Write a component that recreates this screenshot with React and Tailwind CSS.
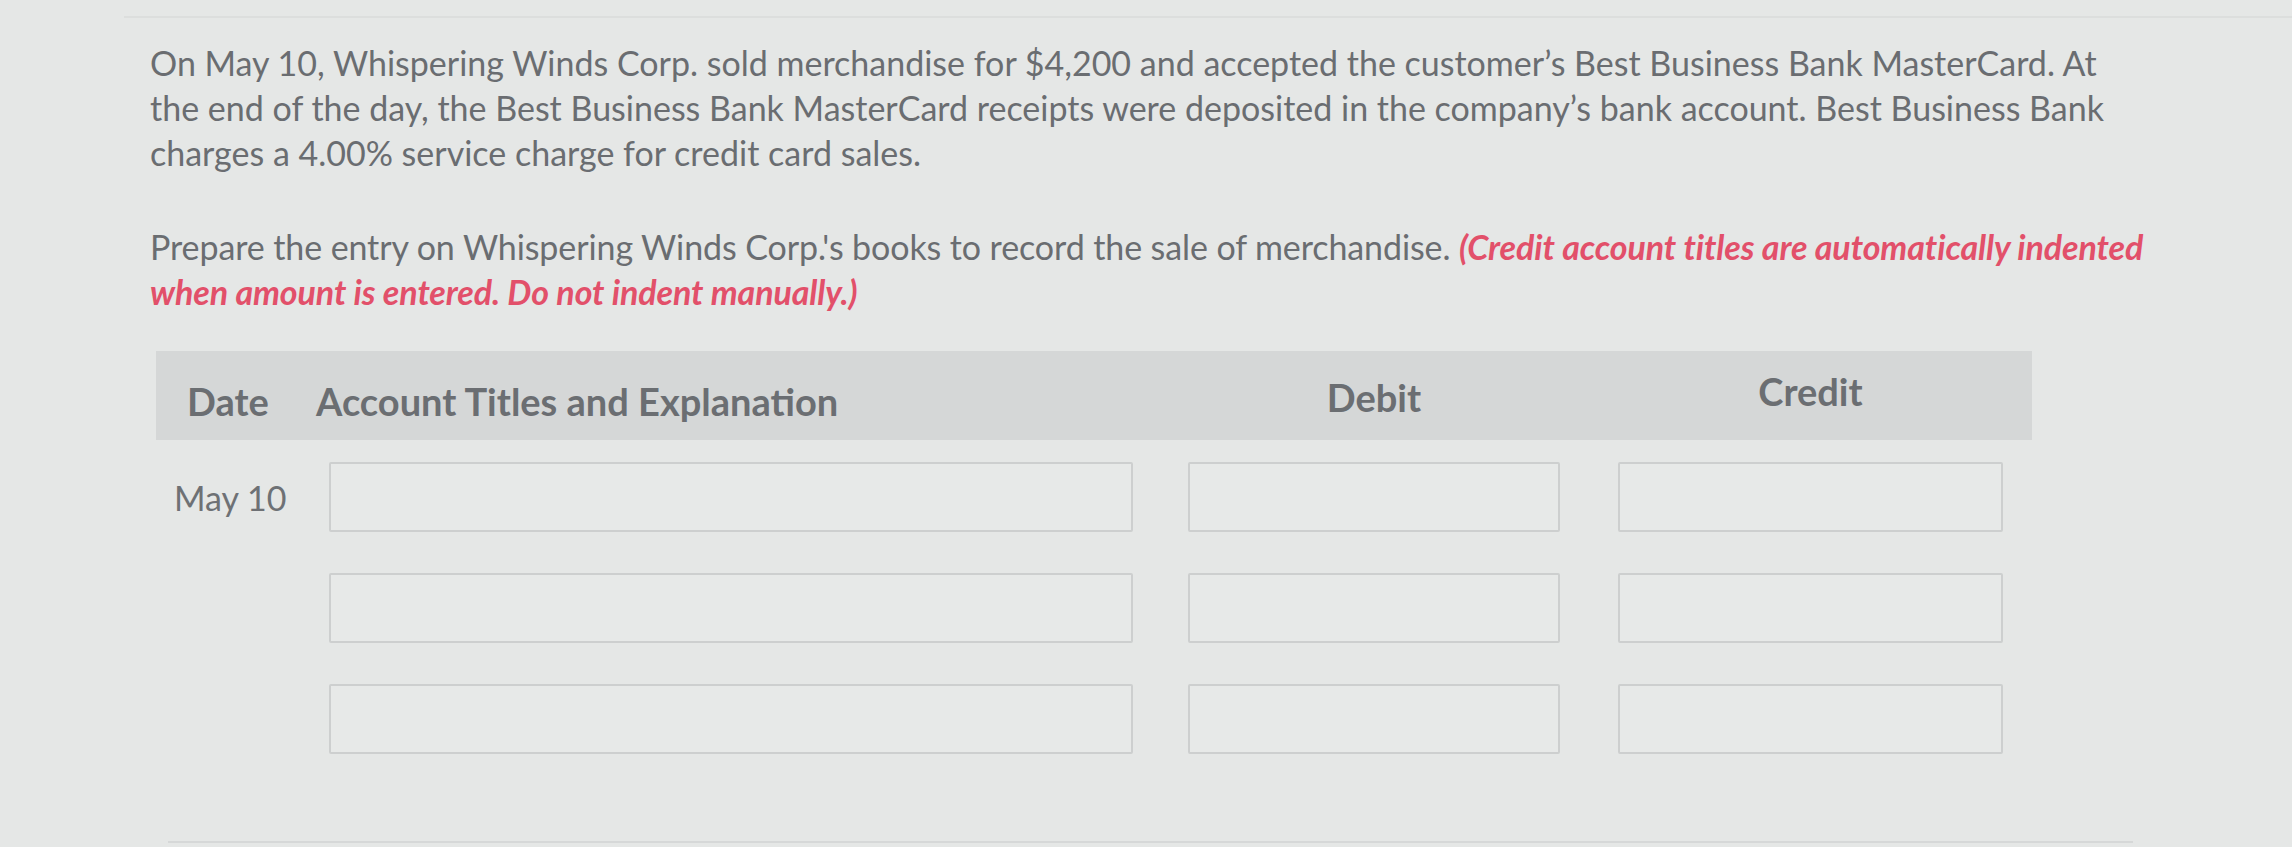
import React from "react";

const Box = ({ w }) => (
  <div className={`h-[70px] ${w} border-2 border-[#cdcfcf] rounded-[2px] bg-[#e7e9e8]`} />
);

export default function App() {
  return (
    <div
      className="w-[2292px] h-[847px] overflow-hidden bg-[#e5e7e6] text-[#6a6d71]"
      style={{ fontFamily: "Lato, 'Open Sans', sans-serif" }}
    >
      <div className="ml-[124px] mt-[16px] h-[2px] bg-[#dcdedd]" />
      <div className="pl-[150px] pt-[22px]">
        <div className="text-[34px] leading-[45px]">
          <div className="whitespace-nowrap">
            On May 10, Whispering Winds Corp. sold merchandise for $4,200 and accepted the customer’s Best Business Bank MasterCard. At
          </div>
          <div className="whitespace-nowrap">
            the end of the day, the Best Business Bank MasterCard receipts were deposited in the company’s bank account. Best Business Bank
          </div>
          <div className="whitespace-nowrap">charges a 4.00% service charge for credit card sales.</div>
        </div>
        <div className="mt-[49px] text-[34px] leading-[45px] tracking-[-0.1px]">
          <div className="whitespace-nowrap">
            Prepare the entry on Whispering Winds Corp.'s books to record the sale of merchandise.{" "}
            <span className="font-bold italic text-[#e2506a]">(Credit account titles are automatically indented</span>
          </div>
          <div className="whitespace-nowrap font-bold italic text-[#e2506a]">
            when amount is entered. Do not indent manually.)
          </div>
        </div>
      </div>

      <div className="ml-[156px] mt-[37px] w-[1876px]">
        <div className="h-[89px] bg-[#d5d7d7] flex items-center text-[38px] font-bold text-[#6b6e72]">
          <div className="w-[160px] pl-[31px] pt-[12px]">Date</div>
          <div className="w-[817px] pt-[12px]">Account Titles and Explanation</div>
          <div className="w-[55px]" />
          <div className="w-[372px] text-center pt-[4px]">Debit</div>
          <div className="w-[58px]" />
          <div className="w-[385px] text-center -mt-[8px]">Credit</div>
        </div>

        <div className="mt-[22px] flex flex-col gap-[41px]">
          {[0, 1, 2].map((i) => (
            <div key={i} className="flex items-center">
              <div className="w-[173px] pl-[18px] text-[34px] text-[#6e7175]">
                {i === 0 ? "May 10" : ""}
              </div>
              <Box w="w-[804px]" />
              <div className="w-[55px]" />
              <Box w="w-[372px]" />
              <div className="w-[58px]" />
              <Box w="w-[385px]" />
            </div>
          ))}
        </div>
      </div>
      <div className="ml-[168px] mt-[87px] w-[1965px] h-[2px] bg-[#d6d8d8]" />
    </div>
  );
}
